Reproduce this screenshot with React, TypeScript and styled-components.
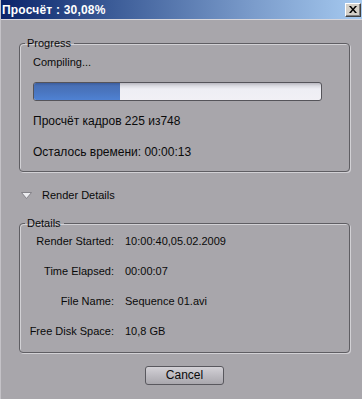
import React from "react";
import styled, { createGlobalStyle } from "styled-components";

const Global = createGlobalStyle`
  html, body { margin: 0; padding: 0; }
  body { background: #a8a6ab; }
  * { box-sizing: border-box; }
`;

const Window = styled.div`
  width: 362px;
  height: 399px;
  background-color: #a8a6ab;
  background-image: radial-gradient(#a2a0a5 0.6px, transparent 0.7px);
  background-size: 2px 2px;
  border-left: 1px solid #c4c2c7;
  font-family: "Liberation Sans", Arial, sans-serif;
  font-size: 11px;
  color: #0a0a0a;
  display: flex;
  flex-direction: column;
  overflow: hidden;
`;

const TitleBar = styled.div`
  height: 20px;
  border-bottom: 1px solid #d8d7dc;
  background: linear-gradient(90deg, #0a246a 0%, #3a5a96 30%, #7b9ccb 70%, #a6caf0 100%);
  display: flex;
  align-items: center;
  justify-content: space-between;
  padding: 0 1px 0 2px;
  margin-left: -1px;
`;

const Title = styled.span`
  color: #ffffff;
  font-weight: bold;
  font-size: 12px;
  letter-spacing: 0.2px;
`;

const CloseButton = styled.button`
  width: 16px;
  height: 14px;
  padding: 0;
  background: #d4d0c8;
  border: 1px solid;
  border-color: #ffffff #404040 #404040 #ffffff;
  box-shadow: inset -1px -1px 0 #808080;
  display: flex;
  align-items: center;
  justify-content: center;
`;

const Body = styled.div`
  padding: 16px 12px 0 18px;
  display: flex;
  flex-direction: column;
`;

const Group = styled.fieldset<{ $pad: string }>`
  margin: 0;
  padding: ${(p) => p.$pad};
  border: 1px solid #5f5e63;
  border-radius: 4px;
  box-shadow: 1px 1px 0 #d2d1d5, inset 1px 1px 0 #d2d1d5;
  min-width: 0;
`;

const Legend = styled.legend<{ $offset: number }>`
  padding: 0 3px 0 2px;
  margin-left: ${(p) => p.$offset}px;
  line-height: 14px;
  font-size: 11px;
`;

const Line = styled.div<{ $mt?: number; $cyr?: boolean }>`
  line-height: 14px;
  height: 14px;
  margin-top: ${(p) => p.$mt ?? 0}px;
  font-size: ${(p) => (p.$cyr ? "12px" : "11px")};
  white-space: nowrap;
`;

const Bar = styled.div`
  margin-top: 13px;
  height: 19px;
  width: 289px;
  border: 1px solid #55545a;
  border-radius: 3px;
  overflow: hidden;
  background: linear-gradient(#b9b8c0 0px, #dcdce3 3px, #eeeef4 6px, #f1f0f5 100%);
  display: flex;
`;

const Fill = styled.div`
  height: 100%;
  background: linear-gradient(#3b5d9e 0px, #4870b6 3px, #4a76c0 9px, #4f82d3 100%);
`;

const Toggle = styled.div`
  margin-top: 16px;
  display: flex;
  align-items: center;
  height: 14px;
  line-height: 14px;
  padding-left: 2px;
  gap: 10px;
`;

const Rows = styled.div`
  display: grid;
  grid-template-columns: 94px 1fr;
  column-gap: 11px;
  row-gap: 16px;
`;

const Label = styled.div`
  text-align: right;
  line-height: 14px;
  white-space: nowrap;
`;

const Value = styled.div`
  line-height: 14px;
  white-space: nowrap;
`;

const Footer = styled.div`
  margin-top: 13px;
  display: flex;
  justify-content: center;
`;

const Button = styled.button`
  width: 79px;
  height: 19px;
  border: 1px solid #59585e;
  border-radius: 3px;
  background: linear-gradient(#d3d1d6 0%, #bdbbc1 50%, #a9a7ad 100%);
  font-family: "Liberation Sans", Arial, sans-serif;
  font-size: 12px;
  color: #0a0a0a;
  padding: 0;
  line-height: 17px;
`;

export default function App() {
  const pct = 30.08;
  return (
    <>
      <Global />
      <Window>
        <TitleBar>
          <Title>Просчёт : 30,08%</Title>
          <CloseButton aria-label="close">
            <svg width="8" height="7" viewBox="0 0 8 7">
              <path d="M0 0h2l2 2.5L6 0h2L5 3.5 8 7H6L4 4.5 2 7H0l3-3.5z" fill="#000" />
            </svg>
          </CloseButton>
        </TitleBar>
        <Body>
          <Group $pad="5px 25px 12px 13px">
            <Legend $offset={-8}>Progress</Legend>
            <Line>Compiling...</Line>
            <Bar>
              <Fill style={{ width: `${pct}%` }} />
            </Bar>
            <Line $mt={13} $cyr>Просчёт кадров 225 из748</Line>
            <Line $mt={17} $cyr>Осталось времени: 00:00:13</Line>
          </Group>
          <Toggle>
            <svg width="11" height="7" viewBox="0 0 11 7">
              <path d="M0.5 0.5h10L5.5 6.5z" fill="#ececf0" stroke="#7d7c82" strokeWidth="0.9" />
            </svg>
            <span>Render Details</span>
          </Toggle>
          <Group $pad="4px 10px 14px 0" style={{ marginTop: 14 }}>
            <Legend $offset={5}>Details</Legend>
            <Rows>
              <Label>Render Started:</Label>
              <Value>10:00:40,05.02.2009</Value>
              <Label>Time Elapsed:</Label>
              <Value>00:00:07</Value>
              <Label>File Name:</Label>
              <Value>Sequence 01.avi</Value>
              <Label>Free Disk Space:</Label>
              <Value>10,8 GB</Value>
            </Rows>
          </Group>
          <Footer>
            <Button>Cancel</Button>
          </Footer>
        </Body>
      </Window>
    </>
  );
}
